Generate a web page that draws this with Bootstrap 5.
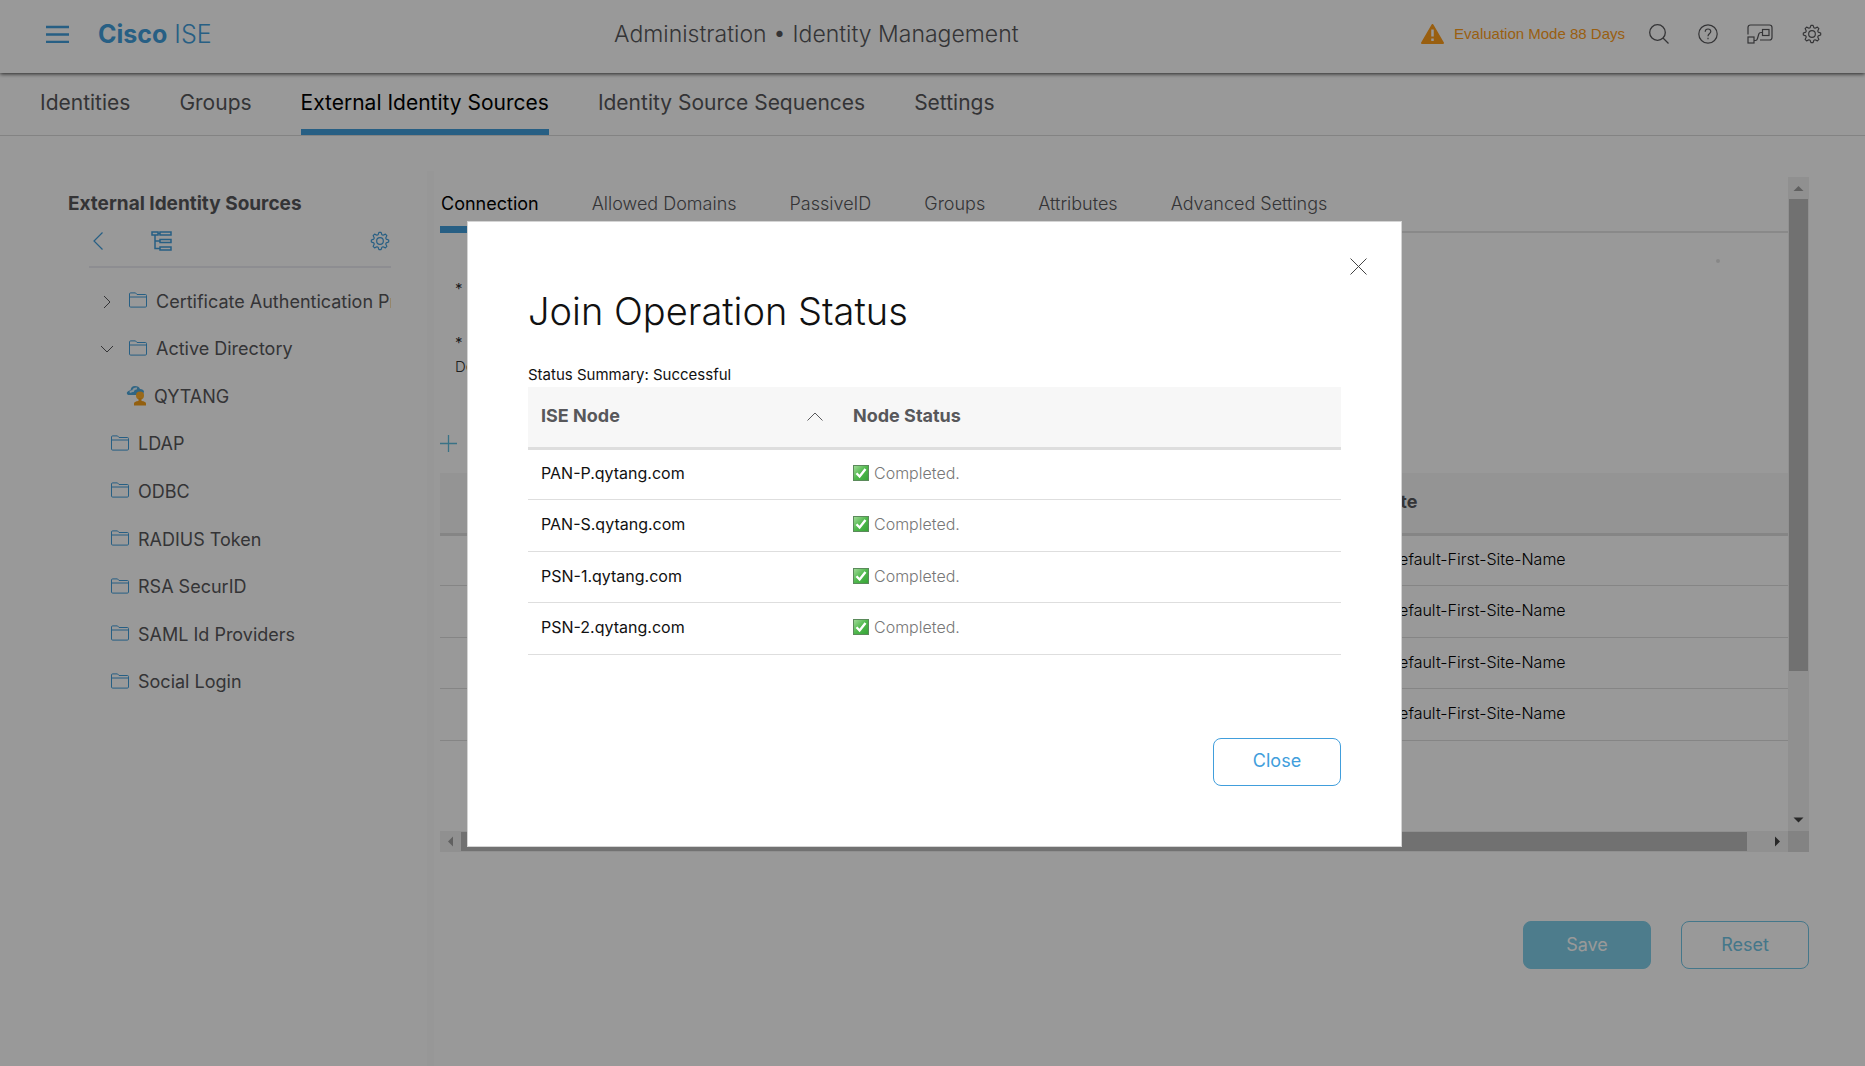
<!DOCTYPE html>
<html lang="en">
<head>
<meta charset="utf-8">
<meta name="viewport" content="width=device-width, initial-scale=1">
<title>Cisco ISE</title>
<link href="https://cdn.jsdelivr.net/npm/bootstrap@5.3.0/dist/css/bootstrap.min.css" rel="stylesheet">
<style>
:root { --ise-blue: #419edc; --ise-sky: #80cfe9; --ise-text: #58585b; }
body { font-family: Inter, "Liberation Sans", sans-serif; color: var(--ise-text); font-size: 16px; line-height: 24px; min-height: 100vh; overflow: hidden; }
svg { display: block; fill: none; stroke: currentColor; flex: none; }
a { color: inherit; text-decoration: none; }
.icon-btn { border: 0; background: none; padding: 0; color: inherit; }

.topbar { height: 73px; padding: 0 43px 6px 46px; box-shadow: 0 1px 4px rgba(0,0,0,.75); position: relative; }
.brand-group { gap: 29px; color: var(--ise-blue); }
.brand { font-size: 25px; font-weight: 300; }
.brand b { font-weight: 700; }
.page-title { font-size: 23px; font-weight: 300; margin: 0; }
.eval { font-family: "Liberation Sans", sans-serif; font-size: 15px; color: #ff9e1b; gap: 10px; margin-right: -5px; }
.tools { gap: 29px; }

.main-nav { padding: 0 40px; gap: 49px; border-bottom: 1px solid #dadada; font-size: 21px; }
.main-nav a { padding: 18px 0 14px; border-bottom: 6px solid transparent; }
.main-nav a.active { color: #000; border-color: var(--ise-blue); }

.work { margin-top: 35px; }
.sidebar { width: 427px; padding: 21px 36px 0 68px; }
.sidebar h2 { font-size: 19px; line-height: 24px; font-weight: 700; margin: 0; }
.tree-tools { margin-left: 21px; height: 52px; border-bottom: 2px solid #ebebf2; color: var(--ise-blue); padding: 0 1px 0 4px; }
.tree { height: 428px; margin: 10px 0 0 21px; padding: 0; list-style: none; grid-auto-rows: 1fr; font-size: 18px; overflow: hidden; }
.tree li { gap: 9px; white-space: nowrap; }
.tree li svg { margin-bottom: 3px; color: var(--ise-blue); }
.tree li .twisty { width: 12px; margin: 0 7px 0 12px; color: var(--ise-text); }
.tree .leaf { padding-left: 22px; }
.tree .child { padding-left: 37px; gap: 8px; }
.splitter { width: 7px; background: #fcfcfc; margin-right: 6px; }
.content-col { min-width: 0; padding: 6px 56px 0 0; }

.panel { height: 675px; grid-template: 1fr 21px / 1fr 21px; }
.pane { min-width: 0; overflow: hidden; }
.sub-nav { gap: 51px; font-size: 18px; font-weight: 300; border-bottom: 2px solid #e4e4e4; }
.sub-nav a { padding: 15px 1px 10px; border-bottom: 7px solid transparent; margin-bottom: -2px; }
.sub-nav a.active { color: #000; font-weight: 400; border-color: var(--ise-blue); }
.join-form { height: 240px; padding: 26px 15px 0; font-size: 15px; color: #333; }
.join-form .field { height: 54px; }
.join-form .hint { font-weight: 300; margin-top: -30px; }
.join-form .add { margin: 56px 0 0 -15px; color: #5fbfe0; }
.busy-dot { width: 4px; height: 4px; border-radius: 50%; background: #e2e2e2; margin: 0 53px 14px auto; }

.ise-table { table-layout: fixed; width: 100%; margin: 0; }
.ise-table th { height: 61px; background: #f7f7f7; border-bottom: 3px solid #dedede; font-size: 18px; font-weight: 700; padding: 0 13px 2px; vertical-align: middle; color: var(--ise-text); }
.ise-table tbody { font-size: 16px; color: #111; }
.ise-table tbody td { border-bottom: 1px solid #dedede; padding: 0 13px 2px; vertical-align: middle; }
.ise-table tbody tr:nth-child(odd) td { height: 51px; }
.ise-table tbody tr:nth-child(even) td { height: 52px; }
.site-table .filler { width: 70%; }
.site-table tbody { font-weight: 300; color: #000; }

.bar { background: #f0f0f0; color: #a0a0a0; }
.bar svg, .grip { flex: none; }
.bar svg { fill: currentColor; stroke: none; }
.bar .end { color: #444; }
.grip { background: #bcbcbc; }
.bar-v .grip { width: 19px; } .bar-h .grip { height: 19px; }
.corner { background: #dadada; }

.ise-btn { width: 128px; height: 48px; border-radius: 8px; font-size: 18px; padding: 0 0 2px; }
.btn-soft { background: var(--ise-sky); color: #fff; border: 1px solid var(--ise-sky); }
.btn-soft-line { color: #72c6e6; border: 1px solid #72c6e6; }
.btn-line { color: var(--ise-blue); border: 1px solid var(--ise-blue); }
.actions { gap: 30px; margin-top: 69px; }

.modal { padding: 2px 0 0 4px; }
.modal-backdrop { --bs-backdrop-opacity: .4; }
.modal-dialog { max-width: 935px; }
.modal-content { border-radius: 0; border: 1px solid #d4d4d4; padding: 36px 60px 60px; color: #111; }
.modal-content h1 { font-size: 38px; line-height: 48px; font-weight: 300; margin: 12px 0 30px; color: #111; }
.dismiss { margin-right: -26px; color: #444; }
.summary { font-size: 15px; line-height: 20px; margin: 0 0 2px; }
.status-table tbody { color: #111; }
.status-table .node { width: 312px; }
.state { gap: 5px; color: #777; font-weight: 300; }
.modal-end { margin-top: 83px; }
</style>
</head>
<body class="d-flex flex-column">
<svg width="0" height="0" class="position-absolute" aria-hidden="true">
  <defs>
    <symbol id="gear" viewBox="0 0 24 24"><path stroke-linejoin="round" d="M19.46 9.72L22.42 10.72V13.28L19.46 14.28L18.89 15.66L20.27 18.46L18.46 20.27L15.66 18.89L14.28 19.46L13.28 22.42H10.72L9.72 19.46L8.34 18.89L5.54 20.27L3.73 18.46L5.11 15.66L4.54 14.28L1.58 13.28V10.72L4.54 9.72L5.11 8.34L3.73 5.54L5.54 3.73L8.34 5.11L9.72 4.54L10.72 1.58H13.28L14.28 4.54L15.66 5.11L18.46 3.73L20.27 5.54L18.89 8.34Z"/><circle cx="12" cy="12" r="4"/></symbol>
    <symbol id="folder" viewBox="0 0 18 16"><path d="M.5 14V2Q.5.9 1.600.9H6.500L8 2.500H16.400Q17.500 2.500 17.500 3.600V14Q17.500 15.100 16.400 15.100H1.600Q.5 15.100.5 14ZM.5 5H17.500"/></symbol>
    <linearGradient id="green" x1="0" y1="0" x2="1" y2="1"><stop offset="0" stop-color="#a5dc9c"/><stop offset=".5" stop-color="#4fb84c"/><stop offset="1" stop-color="#35a336"/></linearGradient>
    <symbol id="done" viewBox="0 0 16 16"><rect x=".5" y=".5" width="15" height="15" fill="url(#green)" stroke="#5b8a5b"/><path d="M3.500 8.200L6.600 11.500L12.500 4" stroke="#fff" stroke-width="2.400"/></symbol>
  </defs>
</svg>

<header class="topbar d-flex justify-content-between align-items-center">
  <div class="brand-group d-flex align-items-center">
    <button class="icon-btn" aria-label="Menu"><svg width="23" height="18" viewBox="0 0 23 18" stroke-width="2.500"><path d="M0 2H23M0 9.500H23M0 17H23"/></svg></button>
    <a href="#" class="brand"><b>Cisco</b> ISE</a>
  </div>
  <p class="page-title">Administration • Identity Management</p>
  <div class="tools d-flex align-items-center">
    <div class="eval d-flex align-items-center">
      <svg width="23" height="20" viewBox="0 0 23 20"><path d="M11.500 1L22 19H1Z" fill="currentColor" stroke-width="2" stroke-linejoin="round"/><path d="M11.500 5.500V12.500M11.500 14.500V17" stroke="#fff" stroke-width="2.500"/></svg>
      <span>Evaluation Mode 88 Days</span>
    </div>
    <button class="icon-btn" aria-label="Search"><svg width="20" height="20" viewBox="0 0 20 20" stroke-width="1.300"><circle cx="8.500" cy="8.500" r="7.800"/><path d="M14 14L19.500 19.500"/></svg></button>
    <button class="icon-btn" aria-label="Help"><svg width="20" height="20" viewBox="0 0 20 20" stroke-width="1.200"><circle cx="10" cy="10" r="9.200"/><path d="M7.200 7.800Q7.300 5 10 5T12.800 7.500C12.800 9.500 10 9.500 10 12.200M10 13.800V15.300"/></svg></button>
    <button class="icon-btn" aria-label="Workflow"><svg width="26" height="20" viewBox="0 0 26 20" stroke-width="1.200"><path d="M1 10.500V3.500Q1 1 3.500 1H22.500Q25 1 25 3.500V13.500Q25 16 22.500 16H13M7 16.500H8.500Q10 16.500 10.500 14.500L11.800 10Q12.200 8.500 14 8.500H15"/><rect x="1" y="13" width="6" height="6"/><rect x="15.500" y="5.500" width="6.500" height="6"/></svg></button>
    <button class="icon-btn" aria-label="Settings menu"><svg width="20" height="20" stroke-width="1.400"><use href="#gear"/></svg></button>
  </div>
</header>

<nav class="main-nav d-flex">
  <a href="#">Identities</a>
  <a href="#">Groups</a>
  <a href="#" class="active" aria-current="page">External Identity Sources</a>
  <a href="#">Identity Source Sequences</a>
  <a href="#">Settings</a>
</nav>

<div class="work d-flex flex-grow-1">
  <aside class="sidebar flex-shrink-0">
    <h2 class="text-nowrap">External Identity Sources</h2>
    <div class="tree-tools d-flex align-items-center">
      <button class="icon-btn" aria-label="Back"><svg width="10" height="18" viewBox="0 0 10 18" stroke-width="1.200"><path d="M9.500.5L1 9L9.500 17.500"/></svg></button>
      <button class="icon-btn ms-5" aria-label="Tree view"><svg width="21" height="20" viewBox="0 0 21 20" stroke-width="1.500"><path d="M1 1H7V4H1ZM9 1H20V4H9ZM9 8.500H20V11.500H9ZM9 16H20V19H9ZM4 4V17.500H9M4 10H9M7 2.500H9"/></svg></button>
      <button class="icon-btn ms-auto" aria-label="Tree settings"><svg width="20" height="20" stroke-width="1.400"><use href="#gear"/></svg></button>
    </div>
    <ul class="tree d-grid">
      <li class="d-flex align-items-center"><svg class="twisty" width="12" height="12" viewBox="0 0 12 12"><path d="M3 0L9 6L3 12"/></svg><svg width="18" height="16"><use href="#folder"/></svg><a href="#">Certificate Authentication Profile</a></li>
      <li class="d-flex align-items-center"><svg class="twisty" width="12" height="12" viewBox="0 0 12 12"><path d="M0 3L6 9L12 3"/></svg><svg width="18" height="16"><use href="#folder"/></svg><a href="#">Active Directory</a></li>
      <li class="child d-flex align-items-center"><svg width="20" height="21" viewBox="0 0 20 21"><path d="M2 10Q-.5 8 2 6.200Q3.500 5.500 4.500 5.300Q5 1 9 1T14 4Q17.500 4 18 6.500L17 10Z" fill="#4fa8dc" stroke="none"/><path d="M4 7.500Q5 6 7 6Q8 3 11 3.500" stroke="#dff2fc" stroke-width="2"/><circle cx="14" cy="10.500" r="4" fill="#ffb02c" stroke="none"/><path d="M12.500 13H15.500V16Q20 16.500 20 18.500V20.500H8V18.500Q8 16.500 12.500 16Z" fill="#f5a01c" stroke="none"/></svg><a href="#">QYTANG</a></li>
      <li class="leaf d-flex align-items-center"><svg width="18" height="16"><use href="#folder"/></svg><a href="#">LDAP</a></li>
      <li class="leaf d-flex align-items-center"><svg width="18" height="16"><use href="#folder"/></svg><a href="#">ODBC</a></li>
      <li class="leaf d-flex align-items-center"><svg width="18" height="16"><use href="#folder"/></svg><a href="#">RADIUS Token</a></li>
      <li class="leaf d-flex align-items-center"><svg width="18" height="16"><use href="#folder"/></svg><a href="#">RSA SecurID</a></li>
      <li class="leaf d-flex align-items-center"><svg width="18" height="16"><use href="#folder"/></svg><a href="#">SAML Id Providers</a></li>
      <li class="leaf d-flex align-items-center"><svg width="18" height="16"><use href="#folder"/></svg><a href="#">Social Login</a></li>
    </ul>
  </aside>
  <div class="splitter flex-shrink-0"></div>

  <main class="content-col flex-grow-1">
    <div class="panel d-grid">
      <div class="pane">
        <nav class="sub-nav d-flex">
          <a href="#" class="active">Connection</a>
          <a href="#">Allowed Domains</a>
          <a href="#">PassiveID</a>
          <a href="#">Groups</a>
          <a href="#">Attributes</a>
          <a href="#">Advanced Settings</a>
        </nav>
        <div class="join-form">
          <div class="busy-dot"></div>
          <div class="field">*</div>
          <div class="field">*</div>
          <div class="hint">Domain</div>
          <button class="icon-btn add" aria-label="Join"><svg width="17" height="17" viewBox="0 0 17 17" stroke-width="1.300"><path d="M8.500 0V17M0 8.500H17"/></svg></button>
        </div>
        <table class="ise-table site-table">
          <thead><tr><th class="filler"></th><th class="ps-0">Site</th></tr></thead>
          <tbody>
            <tr><td></td><td class="ps-1">Default-First-Site-Name</td></tr>
            <tr><td></td><td class="ps-1">Default-First-Site-Name</td></tr>
            <tr><td></td><td class="ps-1">Default-First-Site-Name</td></tr>
            <tr><td></td><td class="ps-1">Default-First-Site-Name</td></tr>
          </tbody>
        </table>
      </div>
      <div class="bar bar-v d-flex flex-column align-items-center">
        <svg width="21" height="22" viewBox="0 0 21 22"><path d="M5.500 14L10.500 9L15.500 14Z"/></svg>
        <div class="grip" style="height:72.2%"></div>
        <svg class="end mt-auto" width="21" height="22" viewBox="0 0 21 22"><path d="M5.500 8.500L10.500 13.500L15.500 8.500Z"/></svg>
      </div>
      <div class="bar bar-h d-flex align-items-center">
        <svg width="21" height="21" viewBox="0 0 21 21"><path d="M13 5.500L8 10.500L13 15.500Z"/></svg>
        <div class="grip" style="width:95.4%"></div>
        <svg class="end ms-auto" width="21" height="21" viewBox="0 0 21 21"><path d="M8 5.500L13 10.500L8 15.500Z"/></svg>
      </div>
      <div class="corner"></div>
    </div>
    <div class="actions d-flex justify-content-end">
      <button class="btn ise-btn btn-soft">Save</button>
      <button class="btn ise-btn btn-soft-line">Reset</button>
    </div>
  </main>
</div>

<div class="modal-backdrop show"></div>
<div class="modal show d-block" tabindex="-1" role="dialog" aria-labelledby="joinTitle">
  <div class="modal-dialog modal-dialog-centered">
    <div class="modal-content">
      <button class="icon-btn dismiss align-self-end" aria-label="Close dialog"><svg width="17" height="17" viewBox="0 0 17 17"><path d="M.5.5L16.500 16.500M16.500.5L.5 16.500"/></svg></button>
      <h1 id="joinTitle">Join Operation Status</h1>
      <p class="summary">Status Summary: Successful</p>
      <table class="ise-table status-table">
        <thead><tr>
          <th class="node"><div class="d-flex align-items-center justify-content-between pe-1">ISE Node <svg width="16" height="9" viewBox="0 0 16 9"><path d="M.5 8.500L8 1L15.500 8.500"/></svg></div></th>
          <th>Node Status</th>
        </tr></thead>
        <tbody>
          <tr><td>PAN-P.qytang.com</td><td><div class="state d-flex align-items-center"><svg width="16" height="16"><use href="#done"/></svg>Completed.</div></td></tr>
          <tr><td>PAN-S.qytang.com</td><td><div class="state d-flex align-items-center"><svg width="16" height="16"><use href="#done"/></svg>Completed.</div></td></tr>
          <tr><td>PSN-1.qytang.com</td><td><div class="state d-flex align-items-center"><svg width="16" height="16"><use href="#done"/></svg>Completed.</div></td></tr>
          <tr><td>PSN-2.qytang.com</td><td><div class="state d-flex align-items-center"><svg width="16" height="16"><use href="#done"/></svg>Completed.</div></td></tr>
        </tbody>
      </table>
      <button class="btn ise-btn btn-line modal-end align-self-end">Close</button>
    </div>
  </div>
</div>
<script src="https://cdn.jsdelivr.net/npm/bootstrap@5.3.0/dist/js/bootstrap.bundle.min.js"></script>
</body>
</html>
